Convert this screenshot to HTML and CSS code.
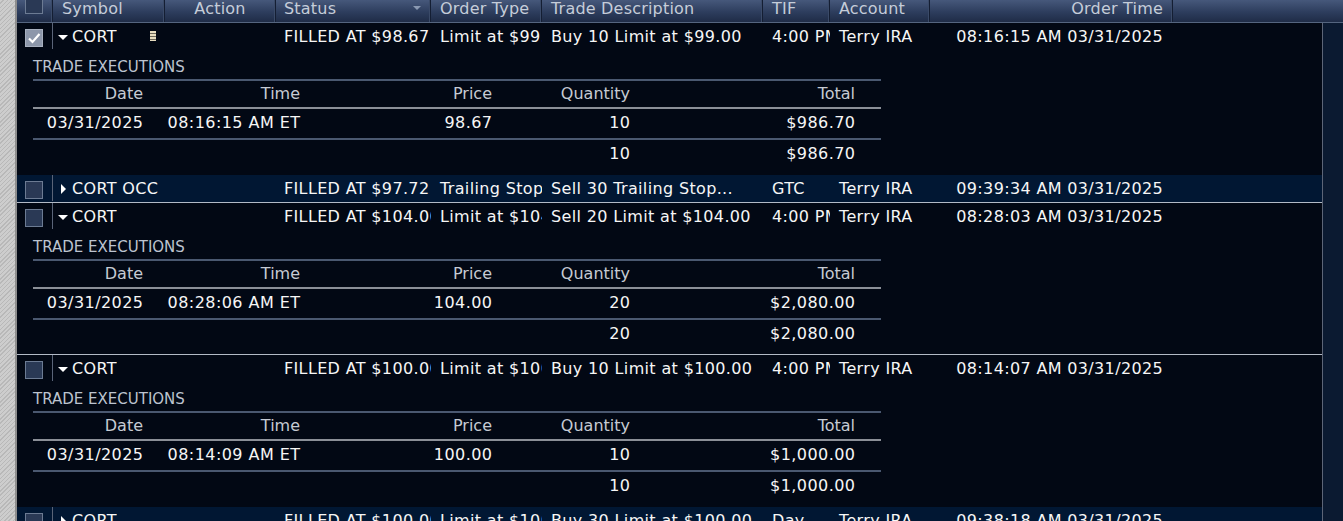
FILE: index.html
```html
<!DOCTYPE html>
<html>
<head>
<meta charset="utf-8">
<link rel="stylesheet" href="styles.css">
</head>
<body>
<div class="app">
  <div class="gutter"></div>
  <div class="main">
    <div class="thead grid">
      <div class="th th-check"><span class="cb"></span></div>
      <div class="th">Symbol</div>
      <div class="th center">Action</div>
      <div class="th sortable">Status<svg class="sort-arrow" width="8" height="4" viewBox="0 0 8 4"><polygon points="0,0 8,0 4,4"/></svg></div>
      <div class="th">Order Type</div>
      <div class="th">Trade Description</div>
      <div class="th">TIF</div>
      <div class="th">Account</div>
      <div class="th right">Order Time</div>
      <div class="th last"></div>
    </div>
    <div class="content">
      <div class="list">

        <div class="order">
          <div class="row grid">
            <div class="td td-check"><span class="cb checked"><svg width="14" height="12" viewBox="0 0 14 12"><path d="M2 6.5 L5.5 10 L12.5 2" fill="none" stroke="#ffffff" stroke-width="2.2"/></svg></span></div>
            <div class="td sym"><svg class="tri" width="10" height="10" viewBox="0 0 10 10"><polygon points="0,3 10,3 5,8"/></svg><span>CORT</span><svg class="note" width="6" height="10" viewBox="0 0 6 10"><rect x="0" y="0" width="6" height="2" fill="#e6dcc0"/><rect x="0" y="2" width="6" height="1" fill="#6b6658"/><rect x="0" y="3" width="6" height="2" fill="#e6dcc0"/><rect x="0" y="5" width="6" height="1" fill="#6b6658"/><rect x="0" y="6" width="6" height="2" fill="#e6dcc0"/><rect x="0" y="8" width="6" height="1" fill="#6b6658"/><rect x="0" y="9" width="6" height="1" fill="#e6dcc0"/></svg></div>
            <div class="td"></div>
            <div class="td status">FILLED AT $98.67</div>
            <div class="td otype">Limit at $99.00</div>
            <div class="td">Buy 10 Limit at $99.00</div>
            <div class="td tif">4:00 PM</div>
            <div class="td">Terry IRA</div>
            <div class="td right">08:16:15 AM 03/31/2025</div>
            <div class="td"></div>
          </div>
          <div class="detail">
            <div class="te-label">TRADE EXECUTIONS</div>
            <div class="subtable">
              <div class="sub-head">
                <div>Date</div><div>Time</div><div>Price</div><div>Quantity</div><div>Total</div><div></div>
              </div>
              <div class="sub-row">
                <div>03/31/2025</div><div>08:16:15 AM ET</div><div>98.67</div><div>10</div><div>$986.70</div><div></div>
              </div>
              <div class="sub-total">
                <div></div><div></div><div></div><div>10</div><div>$986.70</div><div></div>
              </div>
            </div>
          </div>
        </div>

        <div class="order hl sep">
          <div class="row grid">
            <div class="td td-check"><span class="cb"></span></div>
            <div class="td sym"><svg class="tri" width="10" height="10" viewBox="0 0 10 10"><polygon points="3,0 8,5 3,10"/></svg><span>CORT OCC</span></div>
            <div class="td"></div>
            <div class="td status">FILLED AT $97.72</div>
            <div class="td otype">Trailing Stop</div>
            <div class="td">Sell 30 Trailing Stop...</div>
            <div class="td tif">GTC</div>
            <div class="td">Terry IRA</div>
            <div class="td right">09:39:34 AM 03/31/2025</div>
            <div class="td"></div>
          </div>
        </div>

        <div class="order sep">
          <div class="row grid">
            <div class="td td-check"><span class="cb"></span></div>
            <div class="td sym"><svg class="tri" width="10" height="10" viewBox="0 0 10 10"><polygon points="0,3 10,3 5,8"/></svg><span>CORT</span></div>
            <div class="td"></div>
            <div class="td status">FILLED AT $104.00</div>
            <div class="td otype">Limit at $104.00</div>
            <div class="td">Sell 20 Limit at $104.00</div>
            <div class="td tif">4:00 PM</div>
            <div class="td">Terry IRA</div>
            <div class="td right">08:28:03 AM 03/31/2025</div>
            <div class="td"></div>
          </div>
          <div class="detail">
            <div class="te-label">TRADE EXECUTIONS</div>
            <div class="subtable">
              <div class="sub-head">
                <div>Date</div><div>Time</div><div>Price</div><div>Quantity</div><div>Total</div><div></div>
              </div>
              <div class="sub-row">
                <div>03/31/2025</div><div>08:28:06 AM ET</div><div>104.00</div><div>20</div><div>$2,080.00</div><div></div>
              </div>
              <div class="sub-total">
                <div></div><div></div><div></div><div>20</div><div>$2,080.00</div><div></div>
              </div>
            </div>
          </div>
        </div>

        <div class="order">
          <div class="row grid">
            <div class="td td-check"><span class="cb"></span></div>
            <div class="td sym"><svg class="tri" width="10" height="10" viewBox="0 0 10 10"><polygon points="0,3 10,3 5,8"/></svg><span>CORT</span></div>
            <div class="td"></div>
            <div class="td status">FILLED AT $100.00</div>
            <div class="td otype">Limit at $100.00</div>
            <div class="td">Buy 10 Limit at $100.00</div>
            <div class="td tif">4:00 PM</div>
            <div class="td">Terry IRA</div>
            <div class="td right">08:14:07 AM 03/31/2025</div>
            <div class="td"></div>
          </div>
          <div class="detail">
            <div class="te-label">TRADE EXECUTIONS</div>
            <div class="subtable">
              <div class="sub-head">
                <div>Date</div><div>Time</div><div>Price</div><div>Quantity</div><div>Total</div><div></div>
              </div>
              <div class="sub-row">
                <div>03/31/2025</div><div>08:14:09 AM ET</div><div>100.00</div><div>10</div><div>$1,000.00</div><div></div>
              </div>
              <div class="sub-total">
                <div></div><div></div><div></div><div>10</div><div>$1,000.00</div><div></div>
              </div>
            </div>
          </div>
        </div>

        <div class="order hl">
          <div class="row grid">
            <div class="td td-check"><span class="cb"></span></div>
            <div class="td sym"><svg class="tri" width="10" height="10" viewBox="0 0 10 10"><polygon points="3,0 8,5 3,10"/></svg><span>CORT</span></div>
            <div class="td"></div>
            <div class="td status">FILLED AT $100.00</div>
            <div class="td otype">Limit at $100.00</div>
            <div class="td">Buy 30 Limit at $100.00</div>
            <div class="td tif">Day</div>
            <div class="td">Terry IRA</div>
            <div class="td right">09:38:18 AM 03/31/2025</div>
            <div class="td"></div>
          </div>
        </div>

      </div>
      <div class="scroll"></div>
    </div>
  </div>
</div>
</body>
</html>
```

FILE: styles.css
```css
html, body {
  margin: 0;
  padding: 0;
  height: 521px;
  overflow: hidden;
  background: #020814;
  font-family: "DejaVu Sans", Verdana, sans-serif;
}

.app {
  display: flex;
  height: 521px;
}

.gutter {
  width: 15px;
  flex: none;
  background: repeating-linear-gradient(135deg, #cdcdcd 0 2px, #b8b8b8 2px 3px);
  border-right: 2px solid #8e8e8e;
}

.main {
  flex: 1;
  display: flex;
  flex-direction: column;
  min-width: 0;
}

.grid {
  display: grid;
  grid-template-columns: 36px 112px 111px 155px 111px 221px 67px 100px 243px 1fr;
}

/* header */
.thead {
  height: 22px;
  background: linear-gradient(#46587b, #2d3d5d 55%, #1f2c47);
  border-bottom: 1px solid #55657f;
  flex: none;
}

.th {
  font-size: 16px;
  letter-spacing: 0.2px;
  line-height: 17px;
  color: #c5cdd9;
  padding: 0 2px 0 9px;
  border-right: 1px solid #141e33;
  box-shadow: inset -1px 0 0 #3a4a68;
  white-space: nowrap;
  overflow: hidden;
  display: flex;
  align-items: flex-start;
}

.th.center { justify-content: center; padding: 0; }
.th.right { justify-content: flex-end; padding: 0 9px 0 0; }
.th.sortable { padding-left: 8px; position: relative; }
.th.last { border-right: none; box-shadow: none; }

.sort-arrow {
  position: absolute;
  right: 9px;
  top: 6px;
  fill: #8a99b2;
}

.th-check {
  padding: 0 0 0 8px;
  overflow: visible;
}

.th-check .cb {
  margin-top: -4px;
}

/* checkbox */
.cb {
  display: flex;
  align-items: center;
  justify-content: center;
  width: 16px;
  height: 16px;
  background: #2a3955;
  border: 1px solid #6c7b93;
  flex: none;
}

.cb.checked {
  background: #8d97aa;
  border-color: #a8b0bf;
}

/* body */
.content {
  flex: 1;
  display: flex;
  min-height: 0;
}

.list {
  width: 1305px;
  flex: none;
  border-right: 1px solid #5d6577;
  overflow: hidden;
}

.scroll {
  flex: 1;
  background: #0b1a31;
}

.order.sep {
  border-bottom: 1px solid #b3bac6;
}

.order.hl .row {
  background: #011733;
}

.row {
  height: 28px;
  color: #f6f6f6;
  font-size: 16px;
  letter-spacing: 0.35px;
  line-height: 28px;
}

.order.sep .row:only-child {
  height: 27px;
}

.td {
  padding: 0 1px 0 9px;
  white-space: nowrap;
  overflow: hidden;
}

.td.status { padding-left: 8px; padding-right: 0; }
.td.otype { padding-right: 0; }
.td.tif { padding-right: 11px; }
.td.right { text-align: right; padding: 0 10px 0 0; }

.td-check {
  padding: 6px 0 0 8px;
  display: flex;
  align-items: flex-start;
  box-sizing: border-box;
  height: 26px;
  border-right: 1px solid #5a6478;
}

.sym {
  display: flex;
  align-items: center;
  padding-left: 5px;
  padding-right: 8px;
}

.sym span {
  overflow: hidden;
  white-space: nowrap;
  flex: none;
}

.sym .tri {
  fill: #ffffff;
  flex: none;
  margin-right: 4px;
}

.sym .note {
  margin-left: auto;
  margin-right: 1px;
  margin-top: -2px;
  flex: none;
}

/* detail */
.detail {
  padding-left: 16px;
  height: 124px;
  box-sizing: border-box;
}

.order.sep .detail {
  height: 123px;
}

.te-label {
  height: 28px;
  box-sizing: border-box;
  padding-top: 4px;
  line-height: 24px;
  font-size: 15px;
  color: #bcc3cf;
}

.subtable {
  width: 848px;
  border-top: 2px solid #4a5870;
}

.sub-head, .sub-row, .sub-total {
  display: grid;
  grid-template-columns: 117px 157px 192px 138px 225px 1fr;
  font-size: 16px;
}

.sub-head > div, .sub-row > div, .sub-total > div {
  text-align: right;
  padding-right: 7px;
  white-space: nowrap;
}

.sub-row > div, .sub-total > div {
  letter-spacing: 0.45px;
  padding-right: 6.5px;
}

.sub-head {
  height: 26px;
  line-height: 26px;
  color: #c6cbd3;
  border-bottom: 2px solid #8b8f97;
}

.sub-row {
  height: 29px;
  line-height: 27px;
  color: #f6f6f6;
  border-bottom: 2px solid #4a5870;
}

.sub-total {
  height: 27px;
  line-height: 27px;
  color: #f6f6f6;
}
```
